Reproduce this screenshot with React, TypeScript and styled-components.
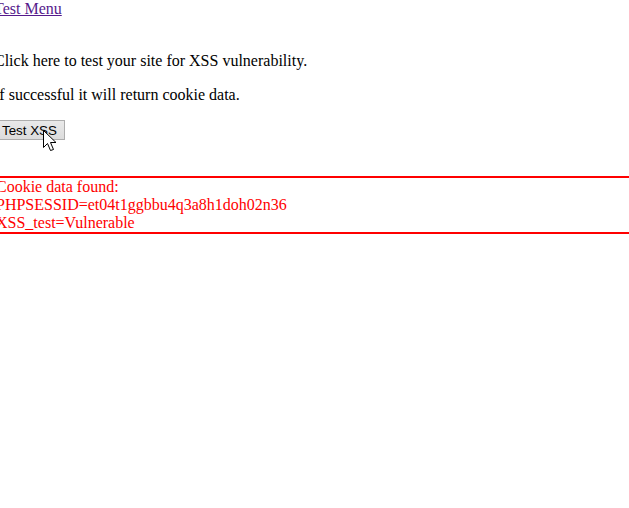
import React from "react";
import styled, { createGlobalStyle } from "styled-components";

const Global = createGlobalStyle`
  html, body { margin: 0; padding: 0; background: #fff; overflow: hidden; }
  body { font-family: "Liberation Serif", "Times New Roman", serif; font-size: 16px; color: #000; }
`;

const Page = styled.div`
  position: relative;
  margin-left: -6px;
  width: calc(100% + 14px);
  display: flex;
  flex-direction: column;
  align-items: flex-start;
`;

const MenuLink = styled.a`
  display: block;
  margin-top: 0;
  line-height: 18px;
  color: #551a8b;
  text-decoration: underline;
`;

const Para = styled.p<{ $top: number }>`
  margin: ${(p) => p.$top}px 0 0 0;
  line-height: 18px;
`;

const TestButton = styled.button`
  margin: 16px 0 0 1px;
  height: 20px;
  padding: 0 7px 0 6px;
  font-family: "Liberation Sans", Arial, sans-serif;
  font-size: 13.33px;
  color: #000;
  background: linear-gradient(#e9e9e9, #dcdcdc);
  border: 1px solid #adadad;
  border-radius: 0;
`;

const CookieBox = styled.div`
  align-self: stretch;
  margin-top: 36px;
  border: 2px solid #ff0000;
  color: #ff0000;
  line-height: 18px;
`;

const Cursor = styled.svg`
  position: absolute;
  left: 49px;
  top: 130px;
`;

export default function App() {
  return (
    <>
      <Global />
      <Page>
        <MenuLink href="#">Test Menu</MenuLink>
        <Para $top={34}>Click here to test your site for XSS vulnerability.</Para>
        <Para $top={16}>If successful it will return cookie data.</Para>
        <TestButton>Test XSS</TestButton>
        <CookieBox>
          Cookie data found:
          <br />
          PHPSESSID=et04t1ggbbu4q3a8h1doh02n36
          <br />
          XSS_test=Vulnerable
        </CookieBox>
        <Cursor width="15" height="23" viewBox="0 0 15 23">
          <path
            d="M0.5 0.5 L0.5 17.5 L4.5 13.5 L7.5 20.5 L10.5 19.5 L7.5 12.5 L13 12.5 Z"
            fill="#fff"
            stroke="#000"
            strokeWidth="1"
            strokeLinejoin="miter"
          />
        </Cursor>
      </Page>
    </>
  );
}
